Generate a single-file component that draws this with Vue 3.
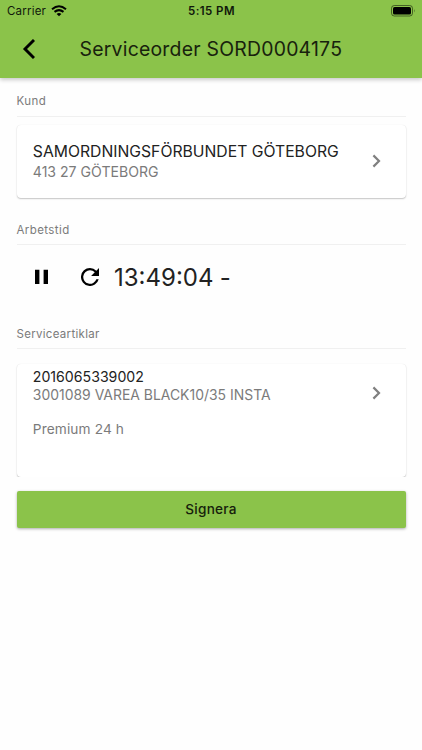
<script setup>
const customer = { name: 'SAMORDNINGSFÖRBUNDET GÖTEBORG', address: '413 27 GÖTEBORG' }
const article = { serial: '2016065339002', model: '3001089 VAREA BLACK10/35 INSTA', agreement: 'Premium 24 h' }
</script>

<template>
  <div class="screen">
    <header class="appbar">
      <div class="status">
        <div class="carrier">
          <span>Carrier</span>
          <svg class="wifi" width="16" height="12" viewBox="0 0 16 12">
            <path d="M1 4.2 Q8 -1.8 15 4.2M3.5 6.9 Q8 3.3 12.5 6.9" fill="none" stroke="#000" stroke-width="2" />
            <path d="M5.6 8.9Q8 7.1 10.4 8.9L8 11.3Z" />
          </svg>
        </div>
        <span class="clock">5:15 PM</span>
        <svg class="battery" width="25" height="12" viewBox="0 0 25 12">
          <rect x=".5" y=".5" width="21" height="10.5" rx="2.8" fill="none" stroke="#000" stroke-opacity=".5" />
          <rect x="2" y="2" width="18" height="7.5" rx="1.6" />
          <path d="M23 4Q24.4 5.8 23 7.6Z" fill-opacity=".5" />
        </svg>
      </div>
      <div class="toolbar">
        <svg class="back" width="13" height="20" viewBox="0 0 13 20">
          <path d="M12 1L3 10L12 19" fill="none" stroke="#000" stroke-width="2.9" />
        </svg>
        <h1>Serviceorder SORD0004175</h1>
      </div>
    </header>

    <main>
      <h2 class="first"><span>Kund</span></h2>
      <section class="card customer">
        <div class="lines">
          <div class="name">{{ customer.name }}</div>
          <div class="address">{{ customer.address }}</div>
        </div>
        <svg class="chevron" width="9" height="14" viewBox="0 0 9 14">
          <path d="M1.4 1.4L7 7L1.4 12.6" fill="none" stroke="#808080" stroke-width="2.2" />
        </svg>
      </section>

      <h2 class="second"><span>Arbetstid</span></h2>
      <section class="timer">
        <svg class="pause" width="14" height="16" viewBox="0 0 14 16">
          <path d="M0 .7H4.4V14.9H0ZM8.6 .7H13V14.9H8.6Z" />
        </svg>
        <svg class="refresh" width="18" height="18" viewBox="4 4 16 16">
          <path d="M17.65 6.35A7.96 7.96 0 0 0 12 4a8 8 0 1 0 7.73 10h-2.08A6 6 0 1 1 12 6c1.66 0 3.14.69 4.22 1.78L13 11h7V4z" />
        </svg>
        <span class="time">13:49:04<span class="dash"> -</span></span>
      </section>

      <h2 class="third"><span>Serviceartiklar</span></h2>
      <div class="list">
        <section class="card article">
          <div class="lines">
            <div class="serial">{{ article.serial }}</div>
            <div class="model">{{ article.model }}</div>
            <div class="agreement">{{ article.agreement }}</div>
          </div>
          <svg class="chevron" width="9" height="14" viewBox="0 0 9 14">
            <path d="M1.4 1.4L7 7L1.4 12.6" fill="none" stroke="#808080" stroke-width="2.2" />
          </svg>
        </section>
      </div>
      <button><span>Signera</span></button>
    </main>
  </div>
</template>

<style>
body { background: #fefefe; }
</style>

<style scoped>
.screen { height: 750px; overflow: hidden; background: #fefefe; color: #222; font-family: Inter, "Liberation Sans", sans-serif; }
svg { display: block; flex: none; }
.appbar { height: 78px; background: #8bc34a; box-shadow: 0 2px 4px rgba(0,0,0,.16), 0 1px 6px rgba(0,0,0,.07); }
.status { height: 22px; display: grid; grid-template-columns: 1fr auto 1fr; align-items: center; padding: 0 6px 0 7px; color: #10180a; }
.carrier { display: flex; align-items: center; gap: 5px; font-size: 11.5px; letter-spacing: .2px; }
.clock { font-size: 11.5px; font-weight: 600; letter-spacing: .45px; }
.battery { justify-self: end; }
.toolbar { height: 54px; display: flex; align-items: center; padding-left: 22px; gap: 44.5px; }
h1 { margin: 0; font-size: 19.4px; line-height: 24px; font-weight: 400; letter-spacing: .24px; color: #18220d; white-space: nowrap; }
main { padding: 0 16.5px; }
h2 { margin: 0; box-sizing: border-box; height: 39px; padding-top: 15px; border-bottom: 1px solid #f0f0f0; font-size: 11.5px; line-height: 16px; font-weight: 400; letter-spacing: .4px; color: #7b7b7b; }
.second, .third { padding-top: 15.5px; }
.second { margin-top: 8px; }
.third { letter-spacing: .3px; }
.card { box-sizing: border-box; display: flex; justify-content: space-between; background: #fff; border-radius: 4px; box-shadow: 0 1px 1.5px rgba(0,0,0,.22), 0 0 1px rgba(0,0,0,.1); padding: 0 24px 0 16.3px; white-space: nowrap; }
.customer { height: 73px; margin-top: 8px; align-items: center; }
.customer .chevron { margin-top: -2px; }
.name { font-size: 15.73px; line-height: 20px; padding-top: 1px; }
.address { font-size: 14.1px; line-height: 20px; color: #7b7b7b; }
.timer { height: 65px; display: flex; align-items: center; padding-left: 18.5px; }
.pause, .refresh { margin-top: -1px; }
.refresh { margin-left: 31.5px; }
.time { margin-left: 15.5px; font-size: 24px; line-height: 30px; }
.dash { font-feature-settings: "calt" 0, "case" 0; letter-spacing: -.4px; }
.list { height: 128px; margin: 0 -3px; padding: 15px 3px 0; box-sizing: border-box; overflow: hidden; }
.article { height: 113px; clip-path: inset(-2px -3px 0 -3px); }
.article .lines { padding-top: 4px; }
.article .chevron { margin-top: 22px; }
.chevron { margin-right: .5px; }
.serial { font-size: 14.15px; line-height: 18px; }
.model { font-size: 13.95px; line-height: 17px; color: #7b7b7b; }
.agreement { margin-top: 17px; font-size: 13.7px; line-height: 18px; color: #7b7b7b; letter-spacing: .12px; }
button { display: block; width: 100%; height: 37px; margin-top: 14px; padding: 0; border: 0; border-radius: 2px; background: #8bc34a; color: #16200c; font: 500 13.6px/37px Inter, sans-serif; letter-spacing: .25px; box-shadow: 0 1px 3px rgba(0,0,0,.32); }
</style>
